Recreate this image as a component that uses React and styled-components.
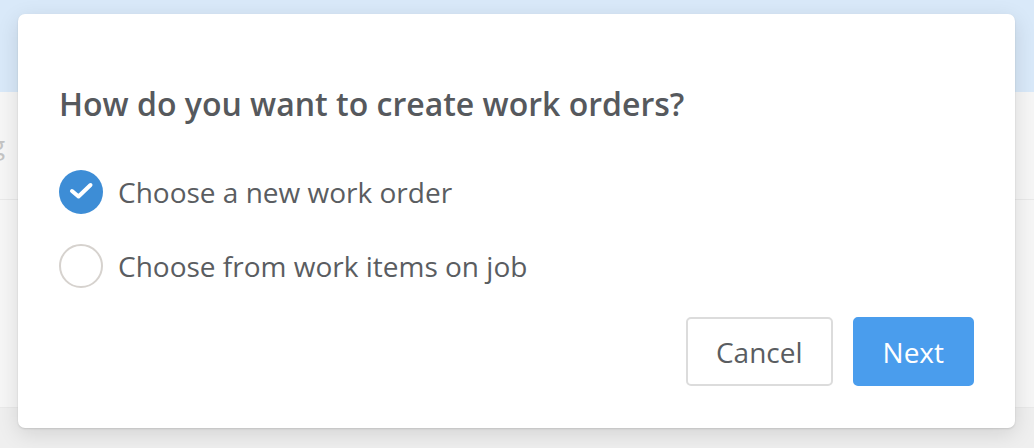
import React, { useState } from 'react'
import styled, { createGlobalStyle } from 'styled-components'

const GlobalStyle = createGlobalStyle`
  html, body {
    margin: 0;
    padding: 0;
    background: #f6f6f6;
    font-family: "Open Sans", "Liberation Sans", sans-serif;
  }
`

const Page = styled.div`
  position: relative;
  width: 1034px;
  height: 448px;
  overflow: hidden;
  display: flex;
  flex-direction: column;
`

const TopBand = styled.div`
  height: 92px;
  background: #d9e9f9;
`

const Section = styled.div`
  height: ${(p) => p.height}px;
  background: ${(p) => p.bg || '#f6f6f6'};
  border-bottom: ${(p) => (p.line ? '1px solid #e9e9e9' : 'none')};
  display: flex;
  align-items: center;
`

const Ghost = styled.span`
  margin-left: -9px;
  font-size: 26px;
  color: #c4c4c4;
`

const Modal = styled.div`
  position: absolute;
  left: 18px;
  top: 14px;
  width: 997px;
  height: 414px;
  box-sizing: border-box;
  padding: 68px 41px 42px;
  background: #fff;
  border-radius: 7px;
  box-shadow: 0 1px 2px rgba(0, 0, 0, 0.12), 0 6px 22px rgba(0, 0, 0, 0.12);
  display: flex;
  flex-direction: column;
`

const Title = styled.h2`
  margin: 0 0 44px;
  font-size: 32px;
  line-height: 44px;
  font-weight: 600;
  color: #56595d;
`

const Options = styled.div`
  display: flex;
  flex-direction: column;
  gap: 30px;
`

const Option = styled.label`
  display: flex;
  align-items: center;
  gap: 15px;
  font-size: 28px;
  color: #5a5d61;
  cursor: pointer;
`

const Circle = styled.span`
  width: 44px;
  height: 44px;
  box-sizing: border-box;
  border-radius: 50%;
  flex: none;
  display: flex;
  align-items: center;
  justify-content: center;
  background: ${(p) => (p.checked ? '#3d8dd6' : '#fff')};
  border: ${(p) => (p.checked ? 'none' : '2px solid #d6d2ce')};
`

const Actions = styled.div`
  margin-top: auto;
  display: flex;
  justify-content: flex-end;
  gap: 20px;
`

const Button = styled.button`
  height: 69px;
  padding: 0 28px;
  box-sizing: border-box;
  border-radius: 5px;
  font-family: inherit;
  font-size: 28px;
  cursor: pointer;
  background: ${(p) => (p.primary ? '#4a9ded' : '#fff')};
  color: ${(p) => (p.primary ? '#fff' : '#5a5d61')};
  border: ${(p) => (p.primary ? '2px solid #4a9ded' : '2px solid #dcdcdc')};
`

const Check = () => (
  <svg width="44" height="44" viewBox="0 0 44 44">
    <polyline
      points="13,21 19.5,26.5 31.5,15"
      fill="none"
      stroke="#fff"
      strokeWidth="4"
      strokeLinecap="round"
      strokeLinejoin="round"
    />
  </svg>
)

const choices = [
  { id: 'new', label: 'Choose a new work order' },
  { id: 'items', label: 'Choose from work items on job' },
]

export default function App() {
  const [selected, setSelected] = useState('new')

  return (
    <>
      <GlobalStyle />
      <Page>
        <TopBand />
        <Section height={108} line>
          <Ghost>g</Ghost>
        </Section>
        <Section height={208} line />
        <Section height={40} bg="#efefef" />
        <Modal>
          <Title>How do you want to create work orders?</Title>
          <Options>
            {choices.map((c) => (
              <Option key={c.id} onClick={() => setSelected(c.id)}>
                <Circle checked={selected === c.id}>
                  {selected === c.id ? <Check /> : null}
                </Circle>
                {c.label}
              </Option>
            ))}
          </Options>
          <Actions>
            <Button type="button">Cancel</Button>
            <Button type="button" primary>Next</Button>
          </Actions>
        </Modal>
      </Page>
    </>
  )
}
